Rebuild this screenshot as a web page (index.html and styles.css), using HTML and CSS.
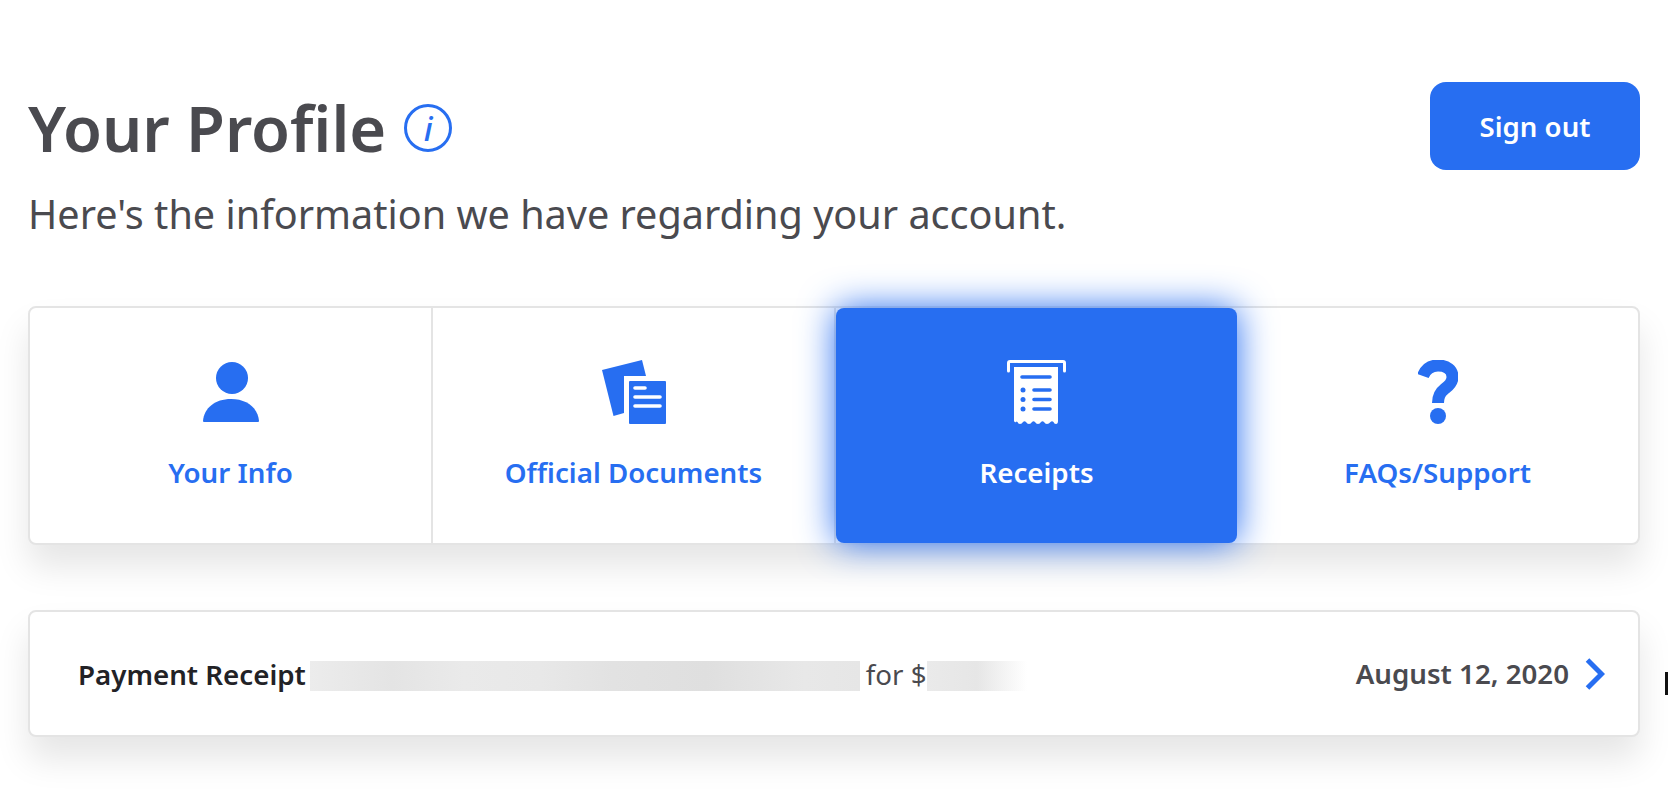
FILE: index.html
```html
<!DOCTYPE html>
<html lang="en">
<head>
    <meta charset="UTF-8">
    <title>Your Profile</title>
    <link rel="stylesheet" href="styles.css">
</head>
<body>
    <div class="container">
        <div class="header">
            <div>
                <h1 class="title">Your Profile <span class="info-icon">i</span></h1>
                <p class="subtitle">Here's the information we have regarding your account.</p>
            </div>
            <button class="button">Sign out</button>
        </div>

        <div class="tabs">
            <div class="tab">
                <svg class="tab-icon" width="56" height="64" viewBox="0 0 56 64">
                    <circle cx="29" cy="18" r="16" fill="currentColor"/>
                    <path d="M0 61 C1 48 12 39 28 39 C44 39 55 48 56 61 Q56 62 55 62 H1 Q0 62 0 61 Z" fill="currentColor"/>
                </svg>
                <span class="tab-label">Your Info</span>
            </div>
            <div class="tab">
                <svg class="tab-icon" width="64" height="64" viewBox="0 0 64 64">
                    <polygon points="0,10 40,0 44,16 22,16 22,53 11.5,56" fill="currentColor"/>
                    <rect x="27" y="21" width="37" height="43" rx="1" fill="currentColor"/>
                    <path d="M33 28 H43 M33 37 H58 M33 46 H58" stroke="#fff" stroke-width="3.6" stroke-linecap="round"/>
                </svg>
                <span class="tab-label">Official Documents</span>
            </div>
            <div class="tab tab-active">
                <svg class="tab-icon" width="59" height="64" viewBox="0 0 59 64">
                    <path d="M1.5 11 V3 Q1.5 1.5 3 1.5 H56 Q57.5 1.5 57.5 3 V11" fill="none" stroke="#fff" stroke-width="3" stroke-linecap="round"/>
                    <path d="M7 7 H51 V61 Q51 64 49 64 Q47 64 46.5 62 Q45 60.500 43.500 62 Q42 64 40 64 Q38 64 37 62 Q35.500 60.500 34 62 Q33 64 31 64 Q29 64 28 62 Q26.500 60.500 25 62 Q24 64 22 64 Q20 64 19 62 Q17.500 60.500 16 62 Q15 64 13 64 Q11 64 10.500 62 Q9.500 61 9 62 Q8 63 7 61 Z" fill="#fff"/>
                    <path d="M15 17 H43 M27 30 H43 M27 39.500 H43 M27 49 H43" stroke="#276ef1" stroke-width="3.600" stroke-linecap="round"/>
                    <circle cx="16" cy="30" r="2.500" fill="#276ef1"/>
                    <circle cx="16" cy="39.500" r="2.500" fill="#276ef1"/>
                    <circle cx="16" cy="49" r="2.500" fill="#276ef1"/>
                </svg>
                <span class="tab-label">Receipts</span>
            </div>
            <div class="tab">
                <svg class="tab-icon" width="40" height="64" viewBox="0 0 40 64">
                    <path d="M5 16 C8 8 14 5.500 20 5.500 C29 5.500 34.500 10 34.500 17 C34.500 24 29 27 26 29.500 C22 32.500 20 36 20 43" fill="none" stroke="currentColor" stroke-width="12"/>
                    <circle cx="20" cy="56" r="8" fill="currentColor"/>
                </svg>
                <span class="tab-label">FAQs/Support</span>
            </div>
        </div>

        <div class="receipt-row">
            <div class="receipt-info">
                <span class="receipt-name">Payment Receipt</span>
                <span class="redacted redacted-name"></span>
                <span class="receipt-for">for $</span><span class="redacted redacted-amount"></span>
            </div>
            <div class="receipt-end">
                <span class="receipt-date">August 12, 2020</span>
                <svg width="20" height="32" viewBox="0 0 20 32">
                    <polyline points="2.500,2 16.500,16 2.500,30" fill="none" stroke="#276ef1" stroke-width="5"/>
                </svg>
            </div>
        </div>
    </div>
    <div class="cursor"></div>
</body>
</html>
```

FILE: styles.css
```css
:root {
    --blue: #276ef1;
    --text-color: #4a4a4f;
    --line: #e4e4e4;
}

* {
    box-sizing: border-box;
    margin: 0;
    padding: 0;
}

html, body {
    height: 100%;
    overflow: hidden;
    background-color: #ffffff;
    color: var(--text-color);
    font-family: 'Noto Sans', sans-serif;
}

.container {
    padding: 82px 28px 0 28px;
}

.header {
    display: flex;
    justify-content: space-between;
    align-items: flex-start;
}

.title {
    display: flex;
    align-items: center;
    gap: 18px;
    font-size: 63.2px;
    line-height: 92px;
    font-weight: 600;
}

.info-icon {
    display: flex;
    justify-content: center;
    align-items: center;
    width: 48px;
    height: 48px;
    border: 3px solid var(--blue);
    border-radius: 50%;
    color: var(--blue);
    font-size: 33px;
    font-style: italic;
    font-weight: 500;
    line-height: 1;
}

.subtitle {
    margin-top: 15px;
    font-size: 39.6px;
    line-height: 50px;
}

.button {
    width: 210px;
    height: 88px;
    border: none;
    border-radius: 16px;
    background-color: var(--blue);
    color: white;
    font-family: 'Noto Sans', sans-serif;
    font-size: 27.6px;
    font-weight: 600;
}

.tabs {
    display: grid;
    grid-template-columns: 403px 403px 401px 1fr;
    height: 239px;
    margin-top: 67px;
    border: 2px solid var(--line);
    border-radius: 8px;
    background-color: white;
    box-shadow: 0 22px 34px rgba(0, 0, 0, 0.1);
}

.tab {
    display: flex;
    flex-direction: column;
    align-items: center;
    padding-top: 52px;
    border-right: 2px solid var(--line);
    color: var(--blue);
}

.tab:last-child {
    border-right: none;
}

.tab-active {
    position: relative;
    border-right: none;
    border-radius: 8px;
    background-color: var(--blue);
    color: white;
    box-shadow: 0 0 36px var(--blue);
}

.tab-icon {
    display: block;
    margin-bottom: 30px;
}

.tab-label {
    font-size: 27.7px;
    line-height: 36px;
    font-weight: 600;
}

.receipt-row {
    display: flex;
    justify-content: space-between;
    align-items: center;
    height: 127px;
    margin-top: 65px;
    padding: 0 33px 0 48px;
    border: 2px solid var(--line);
    border-radius: 8px;
    background-color: white;
    box-shadow: 0 22px 34px rgba(0, 0, 0, 0.1);
}

.receipt-info {
    display: flex;
    align-items: center;
    font-size: 27.7px;
}

.receipt-name {
    color: #222226;
    font-weight: 600;
}

.receipt-for {
    margin-left: 6px;
}

.redacted {
    display: block;
    height: 30px;
    margin-top: 5px;
}

.redacted-name {
    width: 550px;
    margin-left: 4px;
    background: linear-gradient(90deg, #ececec, #e4e4e4 15%, #eaeaea 28%, #e8e8e8 42%, #e2e2e2 55%, #dfdfdf 72%, #e8e8e8 90%, #e6e6e6);
}

.redacted-amount {
    width: 100px;
    background: linear-gradient(90deg, #eaeaea, #e6e6e6 50%, #ffffff);
}

.receipt-end {
    display: flex;
    align-items: center;
    gap: 16px;
}

.receipt-date {
    margin-bottom: 2px;
    font-size: 27.7px;
    font-weight: 600;
}

.cursor {
    position: absolute;
    top: 672px;
    right: 0;
    width: 3px;
    height: 23px;
    background-color: #111111;
}
```
